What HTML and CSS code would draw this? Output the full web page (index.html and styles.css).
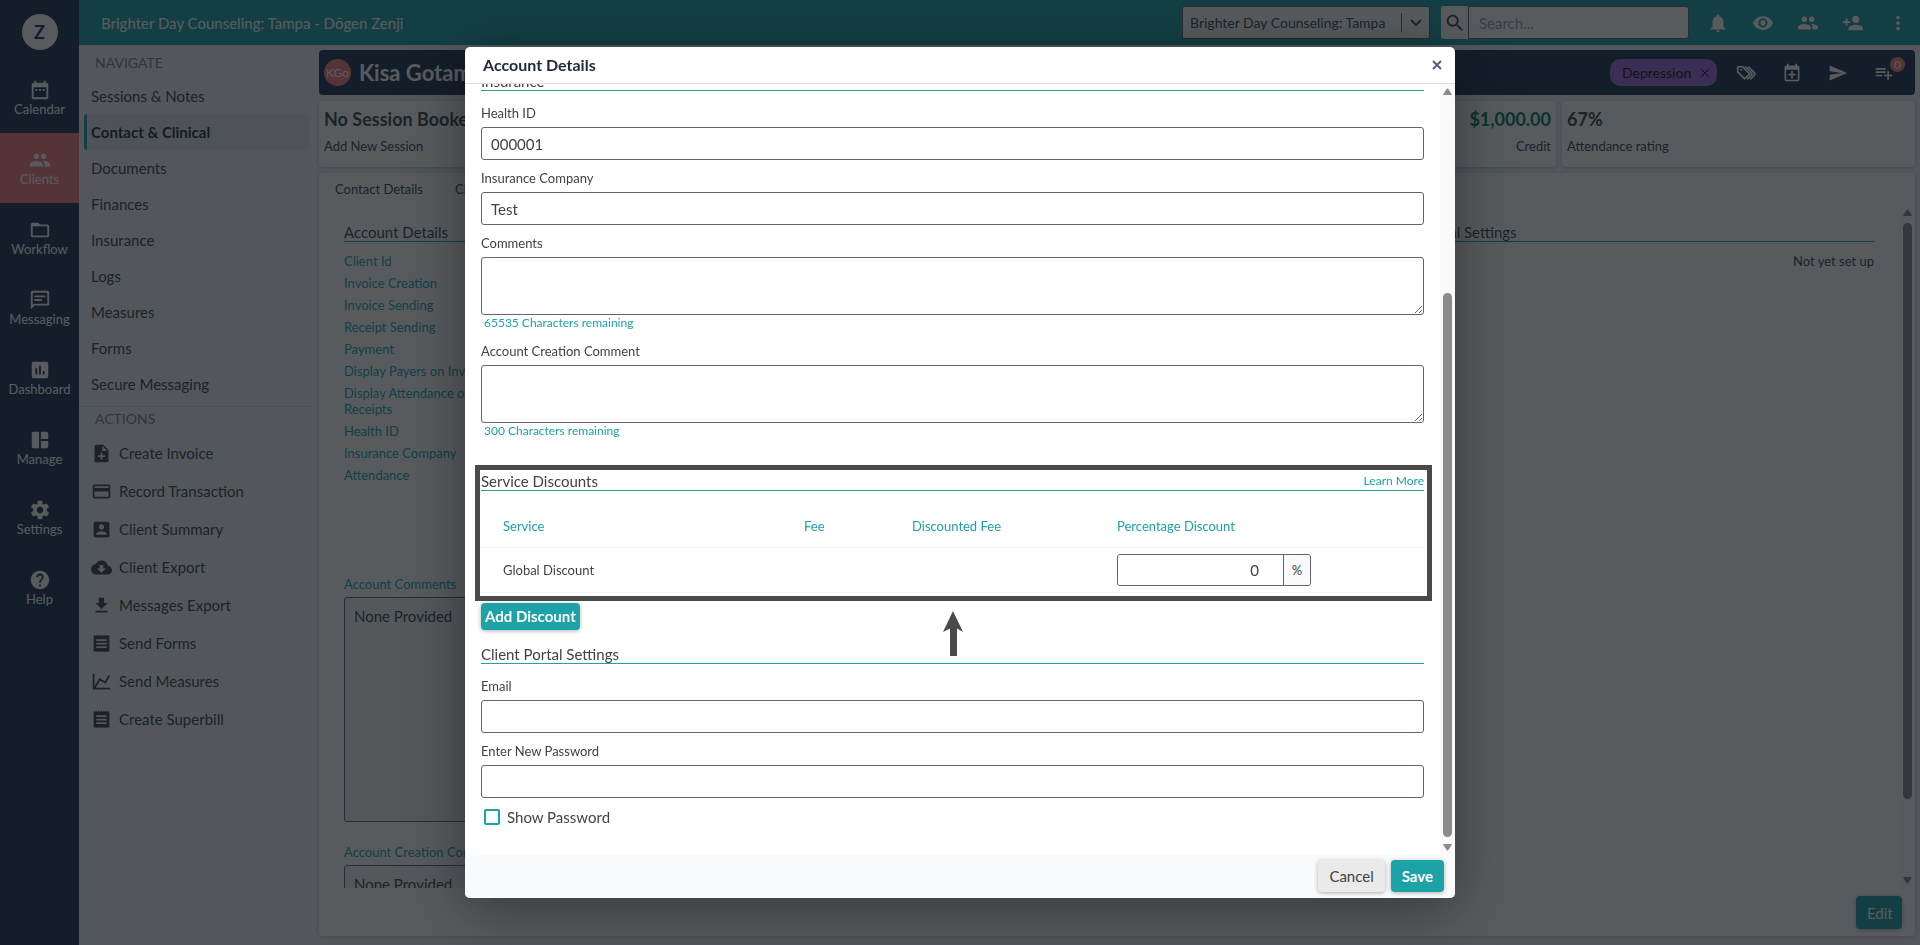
FILE: index.html
```html
<!DOCTYPE html>
<html lang="en">

<head>
  <title>Account Details</title>
  <meta charset="utf-8">
  <link rel="stylesheet" href="styles.css">
</head>

<body>
  <!-- Icon sprite -->
  <svg class="sprite" aria-hidden="true">
    <symbol id="i-calendar" viewBox="0 0 24 24"><path d="M9 11H7v2h2v-2zm4 0h-2v2h2v-2zm4 0h-2v2h2v-2zm2-7h-1V2h-2v2H8V2H6v2H5c-1.11 0-1.99.9-1.99 2L3 20c0 1.1.89 2 2 2h14c1.1 0 2-.9 2-2V6c0-1.1-.9-2-2-2zm0 16H5V9h14v11z"/></symbol>
    <symbol id="i-people" viewBox="0 0 24 24"><path d="M16 11c1.66 0 2.99-1.34 2.99-3S17.66 5 16 5c-1.66 0-3 1.34-3 3s1.34 3 3 3zm-8 0c1.66 0 2.99-1.34 2.99-3S9.66 5 8 5C6.34 5 5 6.34 5 8s1.34 3 3 3zm0 2c-2.33 0-7 1.17-7 3.5V19h14v-2.5c0-2.33-4.67-3.5-7-3.5zm8 0c-.29 0-.62.02-.97.05 1.16.84 1.97 1.97 1.97 3.45V19h6v-2.5c0-2.33-4.67-3.5-7-3.5z"/></symbol>
    <symbol id="i-folder" viewBox="0 0 24 24"><path d="M20 6h-8l-2-2H4c-1.1 0-1.99.9-1.99 2L2 18c0 1.1.9 2 2 2h16c1.1 0 2-.9 2-2V8c0-1.1-.9-2-2-2zm0 12H4V8h16v10z"/></symbol>
    <symbol id="i-message" viewBox="0 0 24 24"><path d="M4 4h16v12H5.17L4 17.17V4m0-2c-1.1 0-1.99.9-1.99 2L2 22l4-4h14c1.1 0 2-.9 2-2V4c0-1.1-.9-2-2-2H4zm2 9h8v2H6v-2zm0-4h12v2H6V7z"/></symbol>
    <symbol id="i-chart" viewBox="0 0 24 24"><path d="M19 3H5c-1.1 0-2 .9-2 2v14c0 1.1.9 2 2 2h14c1.1 0 2-.9 2-2V5c0-1.1-.9-2-2-2zM9 17H7v-7h2v7zm4 0h-2V7h2v10zm4 0h-2v-4h2v4z"/></symbol>
    <symbol id="i-manage" viewBox="0 0 24 24"><path d="M11 21H5c-1.1 0-2-.9-2-2V5c0-1.1.9-2 2-2h6v18zm2 0h6c1.1 0 2-.9 2-2v-6h-8v8zm8-10V5c0-1.1-.9-2-2-2h-6v8h8z"/></symbol>
    <symbol id="i-settings" viewBox="0 0 24 24"><path d="M19.43 12.98c.04-.32.07-.64.07-.98s-.03-.66-.07-.98l2.11-1.65c.19-.15.24-.42.12-.64l-2-3.46c-.12-.22-.39-.3-.61-.22l-2.49 1c-.52-.4-1.08-.73-1.69-.98l-.38-2.65C14.46 2.18 14.25 2 14 2h-4c-.25 0-.46.18-.49.42l-.38 2.65c-.61.25-1.17.59-1.69.98l-2.49-1c-.23-.09-.49 0-.61.22l-2 3.46c-.13.22-.07.49.12.64l2.11 1.65c-.04.32-.07.65-.07.98s.03.66.07.98l-2.11 1.65c-.19.15-.24.42-.12.64l2 3.46c.12.22.39.3.61.22l2.49-1c.52.4 1.08.73 1.69.98l.38 2.65c.03.24.24.42.49.42h4c.25 0 .46-.18.49-.42l.38-2.65c.61-.25 1.17-.59 1.69-.98l2.49 1c.23.09.49 0 .61-.22l2-3.46c.12-.22.07-.49-.12-.64l-2.11-1.65zM12 15.5c-1.93 0-3.5-1.57-3.5-3.5s1.57-3.5 3.5-3.5 3.5 1.57 3.5 3.5-1.57 3.5-3.5 3.5z"/></symbol>
    <symbol id="i-help" viewBox="0 0 24 24"><path d="M12 2C6.48 2 2 6.48 2 12s4.48 10 10 10 10-4.48 10-10S17.52 2 12 2zm1 17h-2v-2h2v2zm2.07-7.75l-.9.92C13.45 12.9 13 13.5 13 15h-2v-.5c0-1.1.45-2.1 1.17-2.83l1.24-1.26c.37-.36.59-.86.59-1.41 0-1.1-.9-2-2-2s-2 .9-2 2H8c0-2.21 1.79-4 4-4s4 1.79 4 4c0 .88-.36 1.68-.93 2.25z"/></symbol>
    <symbol id="i-note-add" viewBox="0 0 24 24"><path d="M14 2H6c-1.1 0-1.99.9-1.99 2L4 20c0 1.1.89 2 1.99 2H18c1.1 0 2-.9 2-2V8l-6-6zm2 14h-3v3h-2v-3H8v-2h3v-3h2v3h3v2zm-3-7V3.5L18.5 9H13z"/></symbol>
    <symbol id="i-card" viewBox="0 0 24 24"><path d="M20 4H4c-1.11 0-1.99.89-1.99 2L2 18c0 1.11.89 2 2 2h16c1.11 0 2-.89 2-2V6c0-1.11-.89-2-2-2zm0 14H4v-6h16v6zm0-10H4V6h16v2z"/></symbol>
    <symbol id="i-account" viewBox="0 0 24 24"><path d="M3 5v14c0 1.1.89 2 2 2h14c1.1 0 2-.9 2-2V5c0-1.1-.9-2-2-2H5c-1.11 0-2 .9-2 2zm12 4c0 1.66-1.34 3-3 3s-3-1.34-3-3 1.34-3 3-3 3 1.34 3 3zm-9 8c0-2 4-3.1 6-3.1s6 1.1 6 3.1v1H6v-1z"/></symbol>
    <symbol id="i-cloud" viewBox="0 0 24 24"><path d="M19.35 10.04C18.67 6.59 15.64 4 12 4 9.11 4 6.6 5.64 5.35 8.04 2.34 8.36 0 10.91 0 14c0 3.31 2.69 6 6 6h13c2.76 0 5-2.24 5-5 0-2.64-2.05-4.78-4.65-4.96zM17 13l-5 5-5-5h3V9h4v4h3z"/></symbol>
    <symbol id="i-download" viewBox="0 0 24 24"><path d="M19 9h-4V3H9v6H5l7 7 7-7zM5 18v2h14v-2H5z"/></symbol>
    <symbol id="i-receipt" viewBox="0 0 24 24"><path d="M18 17H6v-2h12v2zm0-4H6v-2h12v2zm0-4H6V7h12v2zM3 22l1.5-1.5L6 22l1.5-1.5L9 22l1.500-1.500L12 22l1.500-1.500L15 22l1.500-1.500L18 22l1.500-1.500L21 22V2l-1.500 1.500L18 2l-1.500 1.500L15 2l-1.500 1.500L12 2l-1.500 1.500L9 2 7.500 3.500 6 2 4.500 3.500 3 2v20z"/></symbol>
    <symbol id="i-line" viewBox="0 0 24 24"><path d="M16 11.780L20.240 4.450l1.730 1-5.230 9.050-6.510-3.750L5.460 19H22v2H2V3h2v14.540L9.500 8z"/></symbol>
    <symbol id="i-bell" viewBox="0 0 24 24"><path d="M12 22c1.100 0 2-.9 2-2h-4c0 1.100.89 2 2 2zm6-6v-5c0-3.070-1.640-5.640-4.500-6.320V4c0-.83-.67-1.500-1.500-1.500s-1.500.67-1.500 1.500v.68C7.630 5.360 6 7.920 6 11v5l-2 2v1h16v-1l-2-2z"/></symbol>
    <symbol id="i-eye" viewBox="0 0 24 24"><path d="M12 4.500C7 4.500 2.730 7.610 1 12c1.730 4.390 6 7.500 11 7.500s9.270-3.110 11-7.500c-1.730-4.390-6-7.500-11-7.500zM12 17c-2.760 0-5-2.240-5-5s2.240-5 5-5 5 2.240 5 5-2.240 5-5 5zm0-8c-1.660 0-3 1.340-3 3s1.340 3 3 3 3-1.340 3-3-1.340-3-3-3z"/></symbol>
    <symbol id="i-person-add" viewBox="0 0 24 24"><path d="M15 12c2.210 0 4-1.790 4-4s-1.790-4-4-4-4 1.790-4 4 1.790 4 4 4zm-9-2V7H4v3H1v2h3v3h2v-3h3v-2H6zm9 4c-2.670 0-8 1.340-8 4v2h16v-2c0-2.660-5.330-4-8-4z"/></symbol>
    <symbol id="i-more" viewBox="0 0 24 24"><path d="M12 8c1.100 0 2-.9 2-2s-.9-2-2-2-2 .9-2 2 .9 2 2 2zm0 2c-1.100 0-2 .9-2 2s.9 2 2 2 2-.9 2-2-.9-2-2-2zm0 6c-1.100 0-2 .9-2 2s.9 2 2 2 2-.9 2-2-.9-2-2-2z"/></symbol>
    <symbol id="i-search" viewBox="0 0 24 24"><path d="M15.500 14h-.79l-.28-.27C15.410 12.590 16 11.110 16 9.500 16 5.910 13.090 3 9.500 3S3 5.910 3 9.500 5.910 16 9.500 16c1.610 0 3.090-.59 4.230-1.570l.27.28v.79l5 4.990L20.490 19l-4.990-5zm-6 0C7.010 14 5 11.990 5 9.500S7.010 5 9.500 5 14 7.010 14 9.500 11.990 14 9.500 14z"/></symbol>
    <symbol id="i-tags" viewBox="0 0 24 24"><path d="M6.500 9.500a1.300 1.300 0 1 1 0-2.600 1.300 1.300 0 0 1 0 2.600z"/><path class="tag-line" d="M2 5.500v5.200l8.300 8.300 6-6L8 4.500H3a1 1 0 0 0-1 1zM11 4.200l7.900 7.800q1 1 0 2l-5.500 5.600M14.500 4.200l7.500 7.300q1.200 1.500 0 3l-5 5.200"/></symbol>
    <symbol id="i-cal-plus" viewBox="0 0 24 24"><path d="M19 20V8H5v12h14zM16 1h2v2h1a2 2 0 0 1 2 2v15a2 2 0 0 1-2 2H5a2 2 0 0 1-2-2V5a2 2 0 0 1 2-2h1V1h2v2h8V1zm-5 8.500h2V13h3.500v2H13v3.500h-2V15H7.500v-2H11V9.500z"/></symbol>
    <symbol id="i-send" viewBox="0 0 24 24"><path d="M2.010 21L23 12 2.010 3 2 10l15 2-15 2z"/></symbol>
    <symbol id="i-playlist" viewBox="0 0 24 24"><path d="M14 10H2v2h12v-2zm0-4H2v2h12V6zm4 8v-4h-2v4h-4v2h4v4h2v-4h4v-2h-4zM2 16h8v-2H2v2z"/></symbol>
    <symbol id="i-close" viewBox="0 0 12 12"><path d="M2 2l8 8M10 2l-8 8"/></symbol>
    <symbol id="i-up" viewBox="0 0 9 7"><path d="M0 6.500 4 .5h1L9 6.500l-.5.500h-8z"/></symbol>
    <symbol id="i-down" viewBox="0 0 9 7"><path d="M0 .5 4 6.500h1L9 .5 8.500 0h-8z"/></symbol>
  </svg>

  <div class="app">
    <nav class="rail">
      <div class="logo">Z</div>
      <a href="#" class="rail-item"><svg><use href="#i-calendar"/></svg>Calendar</a>
      <a href="#" class="rail-item rail-active"><svg><use href="#i-people"/></svg>Clients</a>
      <a href="#" class="rail-item"><svg><use href="#i-folder"/></svg>Workflow</a>
      <a href="#" class="rail-item"><svg><use href="#i-message"/></svg>Messaging</a>
      <a href="#" class="rail-item"><svg><use href="#i-chart"/></svg>Dashboard</a>
      <a href="#" class="rail-item"><svg><use href="#i-manage"/></svg>Manage</a>
      <a href="#" class="rail-item"><svg><use href="#i-settings"/></svg>Settings</a>
      <a href="#" class="rail-item"><svg><use href="#i-help"/></svg>Help</a>
    </nav>

    <div class="main">
      <header class="topbar">
        <div class="topbar-title">Brighter Day Counseling: Tampa - Dōgen Zenji</div>
        <div class="select-wrap">
          <select aria-label="Location">
            <option>Brighter Day Counseling: Tampa</option>
          </select>
          <svg class="chevron" viewBox="0 0 12 8"><path d="M1 1.500l5 5 5-5"/></svg>
        </div>
        <div class="search">
          <button aria-label="Search"><svg><use href="#i-search"/></svg></button>
          <input type="text" placeholder="Search..." aria-label="Search">
        </div>
        <div class="topbar-icons">
          <button aria-label="Notifications"><svg><use href="#i-bell"/></svg></button>
          <button aria-label="View"><svg><use href="#i-eye"/></svg></button>
          <button aria-label="Clients"><svg><use href="#i-people"/></svg></button>
          <button aria-label="Add client"><svg><use href="#i-person-add"/></svg></button>
          <button aria-label="More"><svg><use href="#i-more"/></svg></button>
        </div>
      </header>

      <div class="workspace">
        <aside class="sidenav">
          <h2>NAVIGATE</h2>
          <a href="#">Sessions &amp; Notes</a>
          <a href="#" class="active">Contact &amp; Clinical</a>
          <a href="#">Documents</a>
          <a href="#">Finances</a>
          <a href="#">Insurance</a>
          <a href="#">Logs</a>
          <a href="#">Measures</a>
          <a href="#">Forms</a>
          <a href="#">Secure Messaging</a>
          <div class="actions">
            <h2>ACTIONS</h2>
            <a href="#"><svg><use href="#i-note-add"/></svg>Create Invoice</a>
            <a href="#"><svg><use href="#i-card"/></svg>Record Transaction</a>
            <a href="#"><svg><use href="#i-account"/></svg>Client Summary</a>
            <a href="#"><svg><use href="#i-cloud"/></svg>Client Export</a>
            <a href="#"><svg><use href="#i-download"/></svg>Messages Export</a>
            <a href="#"><svg><use href="#i-receipt"/></svg>Send Forms</a>
            <a href="#"><svg><use href="#i-line"/></svg>Send Measures</a>
            <a href="#"><svg><use href="#i-receipt"/></svg>Create Superbill</a>
          </div>
        </aside>

        <div class="content">
          <div class="client-bar">
            <span class="avatar">KGo</span>
            <h1>Kisa Gotami</h1>
            <span class="chip">Depression <button aria-label="Remove Depression"><svg class="cross"><use href="#i-close"/></svg></button></span>
            <div class="client-icons">
              <button aria-label="Tags"><svg><use href="#i-tags"/></svg></button>
              <button aria-label="Add session"><svg><use href="#i-cal-plus"/></svg></button>
              <button aria-label="Send"><svg><use href="#i-send"/></svg></button>
              <button aria-label="Tasks"><svg><use href="#i-playlist"/></svg><span class="badge">0</span></button>
            </div>
          </div>

          <div class="stats">
            <div class="stat"><strong>No Session Booked</strong><span>Add New Session</span></div>
            <div class="stat stat-right"><strong>$1,000.00</strong><span>Credit</span></div>
            <div class="stat"><strong>67%</strong><span>Attendance rating</span></div>
          </div>

          <div class="panel">
            <div class="tabs">
              <a href="#">Contact Details</a>
              <a href="#">Clinical Details</a>
            </div>
            <div class="panel-scroll">
              <div class="details">
                <div class="details-col">
                  <h3>Account Details</h3>
                  <ul>
                    <li>Client Id</li>
                    <li>Invoice Creation</li>
                    <li>Invoice Sending</li>
                    <li>Receipt Sending</li>
                    <li>Payment</li>
                    <li>Display Payers on Invoice</li>
                    <li>Display Attendance on Receipts</li>
                    <li>Health ID</li>
                    <li>Insurance Company</li>
                    <li>Attendance</li>
                  </ul>
                  <label for="bgComments">Account Comments</label>
                  <textarea id="bgComments" readonly>None Provided</textarea>
                  <label for="bgCreation">Account Creation Comment</label>
                  <textarea id="bgCreation" readonly>None Provided</textarea>
                </div>
                <div class="details-col"></div>
                <div class="details-col">
                  <h3>Client Portal Settings</h3>
                  <p>Not yet set up</p>
                </div>
              </div>
              <div class="scrollbar">
                <svg><use href="#i-up"/></svg>
                <div class="track"><div class="thumb thumb-top"></div></div>
                <svg><use href="#i-down"/></svg>
              </div>
            </div>
            <div class="panel-footer">
              <button class="btn btn-primary edit">Edit</button>
            </div>
          </div>
        </div>
      </div>
    </div>
  </div>

  <div class="overlay">
    <div class="modal" role="dialog" aria-labelledby="modalTitle">
      <div class="modal-header">
        <h2 id="modalTitle">Account Details</h2>
        <button class="close" aria-label="Close"><svg class="cross"><use href="#i-close"/></svg></button>
      </div>

      <div class="modal-body">
        <form class="form">
          <div class="section-title"><h3>Insurance</h3></div>
          <div class="field">
            <label for="healthId">Health ID</label>
            <input type="text" id="healthId" value="000001">
          </div>
          <div class="field">
            <label for="company">Insurance Company</label>
            <input type="text" id="company" value="Test">
          </div>
          <div class="field">
            <label for="comments">Comments</label>
            <textarea id="comments"></textarea>
            <span class="counter">65535 Characters remaining</span>
          </div>
          <div class="field">
            <label for="creation">Account Creation Comment</label>
            <textarea id="creation"></textarea>
            <span class="counter">300 Characters remaining</span>
          </div>

          <div class="discounts">
            <div class="section-title"><h3>Service Discounts</h3><a href="#">Learn More</a></div>
            <table>
              <thead>
                <tr>
                  <th class="col-service">Service</th>
                  <th class="col-fee">Fee</th>
                  <th class="col-discounted">Discounted Fee</th>
                  <th>Percentage Discount</th>
                </tr>
              </thead>
              <tbody>
                <tr>
                  <td>Global Discount</td>
                  <td></td>
                  <td></td>
                  <td>
                    <div class="percent"><input type="text" value="0" aria-label="Percentage Discount"><span>%</span></div>
                  </td>
                </tr>
              </tbody>
            </table>
            <div class="highlight"></div>
            <svg class="arrow" viewBox="0 0 20 46"><path d="M10 0 20 21l-6-3.500V45H7V17.500L0 21z"/></svg>
          </div>
          <button type="button" class="btn btn-primary add">Add Discount</button>

          <div class="section-title"><h3>Client Portal Settings</h3></div>
          <div class="field">
            <label for="email">Email</label>
            <input type="text" id="email">
          </div>
          <div class="field">
            <label for="password">Enter New Password</label>
            <input type="password" id="password">
          </div>
          <label class="check"><input type="checkbox"> Show Password</label>
        </form>
        <div class="scrollbar">
          <svg><use href="#i-up"/></svg>
          <div class="track"><div class="thumb thumb-bottom"></div></div>
          <svg><use href="#i-down"/></svg>
        </div>
      </div>

      <div class="modal-footer">
        <button class="btn btn-light">Cancel</button>
        <button class="btn btn-primary">Save</button>
      </div>
    </div>
  </div>
</body>

</html>
```
FILE: styles.css
```css
* {
  box-sizing: border-box;
}

body {
  margin: 0;
  font-family: Lato, "Liberation Sans", sans-serif;
  font-size: 13px;
  line-height: 16px;
  color: #424242;
  background-color: #f0f1f6;
}

h1, h2, h3, p, ul {
  margin: 0;
  padding: 0;
  font-weight: normal;
}

a {
  color: inherit;
  text-decoration: none;
}

button, input, select, textarea {
  font-family: inherit;
  font-size: 15px;
  color: inherit;
}

button {
  padding: 0;
  border: none;
  background: none;
  cursor: pointer;
}

svg {
  fill: currentColor;
  flex-shrink: 0;
}

.sprite {
  display: none;
}

.app {
  display: flex;
  height: 100vh;
  overflow: hidden;
}

/* Left rail */
.rail {
  width: 79px;
  background-color: #1f3352;
  color: #fff;
}

.logo {
  width: 36px;
  height: 36px;
  margin: 14px auto 13px;
  border-radius: 50%;
  background-color: #fff;
  color: #1f3352;
  font-size: 18px;
  font-weight: bold;
  line-height: 36px;
  text-align: center;
}

.rail-item {
  display: flex;
  flex-direction: column;
  align-items: center;
  justify-content: center;
  height: 70px;
}

.rail-item svg {
  width: 22px;
  height: 22px;
}

.rail-active {
  background-color: #f77c7f;
}

/* Top bar */
.main {
  flex: 1;
  display: flex;
  flex-direction: column;
  min-width: 0;
}

.topbar {
  display: flex;
  align-items: center;
  height: 45px;
  padding: 0 0 0 22px;
  background-color: #1da2a8;
  color: #fff;
  font-size: 15px;
}

.topbar-title {
  flex: 1;
}

.select-wrap {
  position: relative;
  width: 248px;
  margin-right: 11px;
}

.select-wrap select {
  appearance: none;
  width: 100%;
  height: 33px;
  padding: 0 30px 0 7px;
  border: 1px solid #5f6470;
  border-radius: 2px;
  background-color: #fff;
  color: #424242;
  font-size: 14px;
}

.chevron {
  position: absolute;
  top: 7px;
  right: 0;
  width: 29px;
  height: 19px;
  padding: 5px 8px;
  border-left: 1px solid #5f6470;
  fill: none;
  stroke: #424242;
  stroke-width: 2;
}

.search {
  display: flex;
  width: 248px;
  height: 33px;
  margin-right: 6px;
  color: #424242;
}

.search button {
  width: 27px;
  border-radius: 3px 0 0 3px;
  background-color: #fff;
}

.search svg {
  width: 22px;
  height: 22px;
  margin-top: 4px;
}

.search input {
  flex: 1;
  min-width: 0;
  padding: 0 10px;
  border: 1px solid #5f6470;
  border-radius: 0 3px 3px 0;
}

.search input::placeholder {
  color: #a0a0a0;
}

.topbar-icons {
  display: flex;
}

.topbar-icons button {
  display: flex;
  justify-content: center;
  width: 45px;
  color: #fff;
}

.topbar-icons svg {
  width: 22px;
  height: 22px;
}

/* Side navigation */
.workspace {
  flex: 1;
  display: flex;
  min-height: 0;
}

.sidenav {
  width: 234px;
  padding-top: 9px;
  font-size: 15px;
}

.sidenav h2 {
  height: 24px;
  padding-left: 16px;
  font-size: 14px;
  line-height: 18px;
  color: #7b8088;
}

.sidenav a {
  display: flex;
  align-items: center;
  height: 36px;
  margin: 0 4px 0 5px;
  padding-left: 7px;
}

.sidenav .active {
  padding-left: 4px;
  border-left: 3px solid #1da2a8;
  border-radius: 3px;
  background-color: #e4e5ea;
  color: #1f2937;
  font-weight: bold;
}

.actions {
  margin-top: 4px;
  padding-top: 3px;
  border-top: 1px solid #d8dbe2;
}

.actions a {
  gap: 7px;
  height: 38px;
}

.actions svg {
  width: 21px;
  height: 21px;
}

/* Client page */
.content {
  flex: 1;
  display: flex;
  flex-direction: column;
  gap: 6px;
  min-width: 0;
  padding: 5px 5px 9px 6px;
}

.client-bar {
  display: flex;
  align-items: center;
  height: 45px;
  padding-left: 5px;
  border-radius: 4px;
  background-color: #1f3352;
  color: #fff;
}

.avatar {
  width: 27px;
  height: 27px;
  margin-right: 8px;
  border-radius: 50%;
  background-color: #f77c7f;
  font-size: 12px;
  line-height: 27px;
  text-align: center;
}

.client-bar h1 {
  flex: 1;
  font-size: 22px;
  font-weight: bold;
  line-height: 28px;
}

.chip {
  display: flex;
  align-items: center;
  justify-content: space-between;
  width: 107px;
  height: 27px;
  margin-right: 6px;
  padding: 0 6px 0 12px;
  border-radius: 10px;
  background-color: #a069dc;
  color: #111;
  font-size: 14px;
}

.cross {
  display: block;
  width: 12px;
  height: 12px;
  fill: none;
  stroke: currentColor;
  stroke-width: 1;
}

.client-icons {
  display: flex;
  margin-right: 8px;
}

.client-icons button {
  position: relative;
  display: flex;
  justify-content: center;
  width: 46px;
  color: #fff;
}

.client-icons svg {
  width: 20px;
  height: 20px;
}

.tag-line {
  fill: none;
  stroke: currentColor;
  stroke-width: 2;
}

.badge {
  position: absolute;
  top: -6px;
  right: 2px;
  width: 15px;
  height: 15px;
  border-radius: 50%;
  background-color: #f77c7f;
  font-size: 12px;
  line-height: 15px;
}

.stats {
  display: grid;
  grid-template-columns: 1fr 1fr 353px;
  gap: 6px;
}

.stat {
  display: flex;
  flex-direction: column;
  gap: 8px;
  height: 66px;
  padding: 7px 5px;
  border-radius: 4px;
  background-color: #fff;
  box-shadow: 0 1px 4px rgba(0, 0, 0, 0.2);
}

.stat strong {
  font-size: 18px;
  line-height: 22px;
}

.stat-right {
  text-align: right;
}

.stat-right strong {
  color: #007a4d;
}

.panel {
  flex: 1;
  display: flex;
  flex-direction: column;
  min-height: 0;
  border-radius: 4px;
  background-color: #fff;
  box-shadow: 0 1px 4px rgba(0, 0, 0, 0.2);
}

.tabs {
  display: flex;
  gap: 32px;
  height: 32px;
  padding: 8px 16px;
}

.panel-scroll {
  flex: 1;
  display: flex;
  min-height: 0;
  overflow: hidden;
}

.details {
  flex: 1;
  display: grid;
  grid-template-columns: repeat(3, 1fr);
  gap: 22px;
  padding: 19px 26px 0 25px;
}

.details h3 {
  height: 18px;
  margin-bottom: 8px;
  border-bottom: 1px solid #1da2a8;
  font-size: 15px;
}

.details ul {
  height: 326px;
  list-style: none;
}

.details li {
  width: 160px;
  padding: 3px 0;
  color: #1da2a8;
}

.details p {
  padding: 3px 0;
  text-align: right;
}

.details label {
  display: block;
  margin-bottom: 5px;
  color: #1da2a8;
}

.details textarea {
  display: block;
  width: 100%;
  height: 225px;
  margin-bottom: 22px;
  padding: 9px;
  border: 1px solid #5f6470;
  border-radius: 3px;
  background-color: #f4f4f4;
  resize: none;
}

.panel-footer {
  display: flex;
  justify-content: flex-end;
  padding: 8px 13px 7px;
}

/* Scrollbars */
.scrollbar {
  display: flex;
  flex-direction: column;
  align-items: center;
  width: 15px;
  padding: 4px 0;
  background-color: #fafafa;
  color: #8b8b8b;
}

.scrollbar svg {
  width: 9px;
  height: 7px;
}

.track {
  flex: 1;
  display: flex;
  margin: 7px 0;
}

.thumb {
  width: 9px;
  border-radius: 5px;
  background-color: #8b8b8b;
}

.thumb-top {
  height: 89%;
}

.thumb-bottom {
  align-self: flex-end;
  height: 74%;
}

/* Buttons */
.btn {
  height: 32px;
  padding: 0 11px;
  border-radius: 4px;
  box-shadow: 0 1px 4px rgba(0, 0, 0, 0.3);
}

.btn-primary {
  background-color: #1da2a8;
  color: #fff;
  font-weight: bold;
}

.btn-light {
  background-color: #eaeaea;
}

.edit {
  height: 33px;
  width: 46px;
  font-weight: normal;
}

/* Modal */
.overlay {
  position: fixed;
  inset: 0;
  display: flex;
  align-items: center;
  justify-content: center;
  background-color: rgba(16, 22, 25, 0.7);
}

.modal {
  display: flex;
  flex-direction: column;
  width: min(990px, 95vw);
  height: 90vh;
  border-radius: 5px;
  background-color: #fff;
  box-shadow: 0 10px 60px rgba(0, 0, 0, 0.4);
  overflow: hidden;
}

.modal-header {
  display: flex;
  align-items: center;
  justify-content: space-between;
  height: 37px;
  padding: 0 12px 0 18px;
  border-bottom: 1px solid #dedede;
}

.modal-header h2 {
  font-size: 16px;
  font-weight: bold;
  color: #1f2937;
}

.close {
  color: #4e6378;
}

.close .cross {
  stroke-width: 2;
}

.modal-body {
  flex: 1;
  display: flex;
  min-height: 0;
  overflow: hidden;
}

/* scrolled to the end: the top of the form runs under the header */
.form {
  flex: 1;
  display: flex;
  flex-direction: column;
  justify-content: flex-end;
  padding: 0 16px 24px;
}

.section-title {
  display: flex;
  align-items: center;
  justify-content: space-between;
  flex-shrink: 0;
  height: 19px;
  margin-bottom: 4px;
  border-bottom: 1px solid #1da2a8;
}

.section-title h3 {
  font-size: 15px;
  line-height: 18px;
}

.section-title a {
  color: #1da2a8;
  font-size: 12px;
}

.field {
  display: flex;
  flex-direction: column;
  flex-shrink: 0;
}

.field label {
  height: 32px;
  padding-top: 10px;
}

.field input,
.field textarea {
  height: 33px;
  padding: 0 9px;
  border: 1px solid #5f6470;
  border-radius: 3px;
  background-color: #fff;
}

.field textarea {
  height: 58px;
}

.counter {
  height: 18px;
  padding: 0 3px;
  color: #1da2a8;
  font-size: 12px;
}

.discounts {
  position: relative;
  flex-shrink: 0;
  margin-top: 31px;
}

.discounts table {
  width: 100%;
  margin-top: 14px;
  border-collapse: collapse;
  table-layout: fixed;
}

.discounts .section-title {
  margin-bottom: 0;
}

.discounts th,
.discounts td {
  height: 42px;
  padding: 0;
  border-bottom: 1px solid #f4f4f4;
  font-weight: normal;
  text-align: left;
}

.discounts td {
  height: 45px;
}

.discounts th {
  color: #1da2a8;
}

.discounts th:first-child,
.discounts td:first-child {
  padding-left: 22px;
}

.col-service {
  width: 323px;
}

.col-fee {
  width: 108px;
}

.col-discounted {
  width: 205px;
}

.percent {
  display: flex;
  width: 194px;
  height: 32px;
  border: 1px solid #5f6470;
  border-radius: 3px;
}

.percent input {
  flex: 1;
  min-width: 0;
  padding: 0 24px 0 9px;
  border: none;
  border-radius: 3px;
  text-align: right;
}

.percent span {
  width: 27px;
  border-left: 1px solid #5f6470;
  border-radius: 0 3px 3px 0;
  background-color: #f9fafc;
  line-height: 30px;
  text-align: center;
}

/* Call-out drawn round the discount table */
.highlight {
  position: absolute;
  inset: -7px -8px -8px -6px;
  border: 5px solid #4a4a4a;
  pointer-events: none;
}

.arrow {
  position: absolute;
  top: 100%;
  left: 49%;
  width: 20px;
  height: 46px;
  margin-top: 18px;
  fill: #4a4a4a;
}

.add {
  align-self: flex-start;
  flex-shrink: 0;
  height: 27px;
  margin: 10px 0 15px;
  padding: 0 4px;
}

.check {
  display: flex;
  align-items: center;
  flex-shrink: 0;
  gap: 7px;
  height: 28px;
  margin-top: 5px;
  padding-left: 3px;
  font-size: 15px;
}

.check input {
  appearance: none;
  width: 16px;
  height: 16px;
  margin: 0;
  border: 2px solid #1da2a8;
  border-radius: 2px;
}

.modal-footer {
  display: flex;
  align-items: center;
  justify-content: flex-end;
  gap: 6px;
  height: 43px;
  padding: 0 11px;
  background-color: #f9fafc;
}
```
